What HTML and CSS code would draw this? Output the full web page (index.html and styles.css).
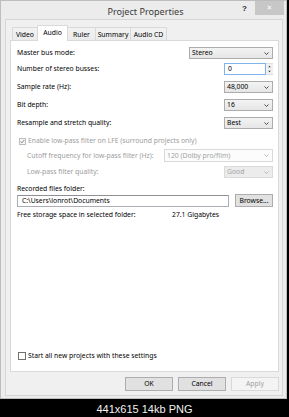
FILE: index.html
```html
<!DOCTYPE html>
<html>
<head>
<meta charset="utf-8">
<link rel="stylesheet" href="styles.css">
</head>
<body>
<div class="window">
  <div class="titlebar">
    <div></div>
    <div class="title">Project Properties</div>
    <div class="caption-btns"><span class="help">?</span><span class="close">&#x2715;</span></div>
  </div>
  <div class="client">
    <div class="tabs">
      <div class="tab w-video">Video</div>
      <div class="tab tab-active w-audio">Audio</div>
      <div class="tab w-ruler">Ruler</div>
      <div class="tab w-summary">Summary</div>
      <div class="tab w-cd">Audio CD</div>
    </div>
    <div class="panel">
      <div class="row r-first">
        <span class="label">Master bus mode:</span>
        <div class="select w-stereo"><span>Stereo</span><svg class="chev" width="5" height="3" viewBox="0 0 5 3"><path d="M0.5 0.5 L2.5 2.5 L4.5 0.5" fill="none" stroke="#3a3a3a" stroke-width="0.9"/></svg></div>
      </div>
      <div class="row r-spin">
        <span class="label">Number of stereo busses:</span>
        <div class="spin">
          <div class="spin-input">0</div>
          <div class="spin-btns">
            <svg width="7" height="6" viewBox="0 0 7 6"><path d="M2 4 L3.5 2 L5 4 Z" fill="#333"/></svg>
            <svg width="7" height="6" viewBox="0 0 7 6"><path d="M2 2 L3.5 4 L5 2 Z" fill="#333"/></svg>
          </div>
        </div>
      </div>
      <div class="row r-gap6">
        <span class="label">Sample rate (Hz):</span>
        <div class="select w-small"><span>48,000</span><svg class="chev" width="5" height="3" viewBox="0 0 5 3"><path d="M0.5 0.5 L2.5 2.5 L4.5 0.5" fill="none" stroke="#3a3a3a" stroke-width="0.9"/></svg></div>
      </div>
      <div class="row r-gap6">
        <span class="label">Bit depth:</span>
        <div class="select w-small"><span>16</span><svg class="chev" width="5" height="3" viewBox="0 0 5 3"><path d="M0.5 0.5 L2.5 2.5 L4.5 0.5" fill="none" stroke="#3a3a3a" stroke-width="0.9"/></svg></div>
      </div>
      <div class="row r-gap6">
        <span class="label">Resample and stretch quality:</span>
        <div class="select w-small"><span>Best</span><svg class="chev" width="5" height="3" viewBox="0 0 5 3"><path d="M0.5 0.5 L2.5 2.5 L4.5 0.5" fill="none" stroke="#3a3a3a" stroke-width="0.9"/></svg></div>
      </div>
      <div class="row r-gap6 check-row indent-check">
        <span class="checkbox checkbox-disabled"><svg width="6" height="6" viewBox="0 0 6 6"><path d="M0.8 3 L2.3 4.6 L5.2 1.2" fill="none" stroke="#7a7a7a" stroke-width="1.1"/></svg></span>
        <span class="label disabled">Enable low-pass filter on LFE (surround projects only)</span>
      </div>
      <div class="row r-gap2 row-tall">
        <span class="label disabled indent">Cutoff frequency for low-pass filter (Hz):</span>
        <div class="select select-disabled w-cutoff"><span>120 (Dolby pro/film)</span><svg class="chev" width="5" height="3" viewBox="0 0 5 3"><path d="M0.5 0.5 L2.5 2.5 L4.5 0.5" fill="none" stroke="#b0b0b0" stroke-width="0.9"/></svg></div>
      </div>
      <div class="row r-gap4">
        <span class="label disabled indent">Low-pass filter quality:</span>
        <div class="select select-disabled select-grey w-small"><span>Good</span><svg class="chev" width="5" height="3" viewBox="0 0 5 3"><path d="M0.5 0.5 L2.5 2.5 L4.5 0.5" fill="none" stroke="#b0b0b0" stroke-width="0.9"/></svg></div>
      </div>
      <div class="text-line r-gap6">Recorded files folder:</div>
      <div class="row r-gap1 folder-row">
        <div class="textbox">C:\Users\lonrot\Documents</div>
        <div class="btn btn-browse">Browse...</div>
      </div>
      <div class="storage-row">
        <span>Free storage space in selected folder:</span>
        <span>27.1 Gigabytes</span>
      </div>
      <div class="row check-row start-row">
        <span class="checkbox"></span>
        <span class="label">Start all new projects with these settings</span>
      </div>
    </div>
    <div class="buttons">
      <div class="btn btn-dialog">OK</div>
      <div class="btn btn-dialog">Cancel</div>
      <div class="btn btn-dialog btn-disabled">Apply</div>
    </div>
  </div>
</div>
<div class="footer">441x615 14kb PNG</div>
</body>
</html>
```
FILE: styles.css
```css
* { box-sizing: border-box; }
html, body { margin: 0; padding: 0; }
body {
  width: 289px;
  height: 417px;
  overflow: hidden;
  background: #000;
  font-family: "Noto Sans", sans-serif;
  font-size: 6.8px;
  color: #000;
}
.window {
  width: 287px;
  height: 399px;
  background: #ececec;
  border: 1px solid #bdbdbd;
  display: flex;
  flex-direction: column;
}
.titlebar {
  height: 18px;
  display: grid;
  grid-template-columns: 1fr auto 1fr;
  padding-left: 4px;
}
.title {
  font-size: 9.1px;
  color: #3a3a3a;
  line-height: 18px;
  padding-top: 2px;
  white-space: nowrap;
}
.caption-btns {
  display: flex;
  justify-content: flex-end;
  align-items: flex-start;
  padding-right: 2px;
}
.help {
  font-size: 8px;
  font-weight: bold;
  color: #2a2a2a;
  line-height: 16px;
  margin-right: 8px;
  font-family: "Liberation Sans", sans-serif;
}
.close {
  width: 29px;
  height: 14px;
  background: #c7c7c7;
  color: #fff;
  font-size: 7px;
  line-height: 14px;
  text-align: center;
  font-family: "DejaVu Sans", sans-serif;
}
.client {
  margin-left: 4px;
  width: 278px;
  height: 377px;
  background: #f0f0f0;
  border: 1px solid #d6d6d6;
  padding: 5px 0 0 4px;
}
.tabs {
  display: flex;
  align-items: flex-end;
  height: 15px;
  margin-left: 2px;
  position: relative;
  z-index: 1;
}
.tab {
  height: 13px;
  margin-right: -1px;
  border: 1px solid #d9d9d9;
  border-bottom: none;
  background: linear-gradient(#f2f2f2, #ebebeb);
  text-align: center;
  line-height: 11px;
  padding-top: 1px;
  white-space: nowrap;
}
.tab-active {
  height: 16px;
  margin-bottom: -1px;
  background: #fff;
  position: relative;
  line-height: 12px;
  padding-top: 1px;
}
.w-video { width: 26px; }
.w-audio { width: 31px; }
.w-ruler { width: 29px; }
.w-summary { width: 36px; }
.w-cd { width: 37px; }
.panel {
  width: 269px;
  height: 332px;
  background: #fff;
  border: 1px solid #d9d9d9;
  padding: 6px 5px 9px 6px;
  display: flex;
  flex-direction: column;
}
.row {
  height: 12px;
  display: flex;
  align-items: center;
  justify-content: space-between;
  white-space: nowrap;
}
.row-tall { height: 13px; }
.r-spin { margin-top: 4px; }
.r-gap6 { margin-top: 6px; }
.r-gap4 { margin-top: 4px; }
.r-gap2 { margin-top: 2px; }
.r-gap1 { margin-top: 1px; }
.label { line-height: 10px; }
.disabled { color: #9c9c9c; }
.indent { padding-left: 10px; }
.select {
  height: 100%;
  border: 1px solid #acacac;
  background: linear-gradient(#f3f3f3, #e6e6e6);
  display: flex;
  align-items: center;
  justify-content: space-between;
  padding: 0 3px 0 2px;
  line-height: 10px;
}
.select-disabled {
  border-color: #d9d9d9;
  background: #fcfcfc;
  color: #a3a3a3;
}
.select-grey { background: #ececec; border-color: #dadada; }
.w-stereo { width: 84px; }
.w-small { width: 49px; }
.w-cutoff { width: 109px; }
.chev { display: block; }
.spin {
  width: 49px;
  height: 100%;
  display: flex;
}
.spin-input {
  flex: 1;
  border: 1px solid #7eb4ea;
  background: #fff;
  padding-left: 3px;
  line-height: 10px;
}
.spin-btns {
  width: 7px;
  display: flex;
  flex-direction: column;
  background: #f0f0f0;
  border-top: 1px solid #e0e0e0;
  border-bottom: 1px solid #e0e0e0;
}
.spin-btns svg { display: block; width: 7px; height: 5px; }
.check-row { justify-content: flex-start; gap: 2px; }
.indent-check { padding-left: 2px; }
.checkbox {
  width: 7px;
  height: 7px;
  border: 1px solid #707070;
  background: #fff;
  display: flex;
  align-items: center;
  justify-content: center;
  flex: none;
}
.checkbox svg { display: block; width: 5px; height: 5px; }
.checkbox-disabled { border-color: #bcbcbc; background: #f6f6f6; }
.text-line { height: 10px; line-height: 10px; }
.folder-row { gap: 6px; }
.textbox {
  flex: 1;
  height: 100%;
  border: 1px solid #abadb3;
  border-top-color: #8e8f94;
  background: #fff;
  padding-left: 4px;
  line-height: 10px;
}
.btn {
  border: 1px solid #adadad;
  background: #e1e1e1;
  display: flex;
  align-items: center;
  justify-content: center;
  line-height: 10px;
}
.btn-browse { width: 38px; height: 13px; margin-top: -1px; }
.storage-row {
  margin-top: 3px;
  height: 10px;
  line-height: 10px;
  display: grid;
  grid-template-columns: 155px 1fr;
  white-space: nowrap;
}
.start-row { margin-top: auto; padding-left: 1px; }
.start-row .checkbox { width: 8px; height: 8px; }
.buttons {
  display: flex;
  justify-content: flex-end;
  gap: 5px;
  margin-top: 5px;
  padding-right: 3px;
}
.btn-dialog { width: 48px; height: 14px; }
.btn-disabled { background: #f4f4f4; border-color: #d9d9d9; color: #a0a0a0; }
.footer {
  height: 18px;
  color: #f2f2f2;
  font-family: "Liberation Sans", sans-serif;
  font-size: 11px;
  line-height: 18px;
  padding-top: 1px;
  text-align: center;
  width: 289px;
}
```
